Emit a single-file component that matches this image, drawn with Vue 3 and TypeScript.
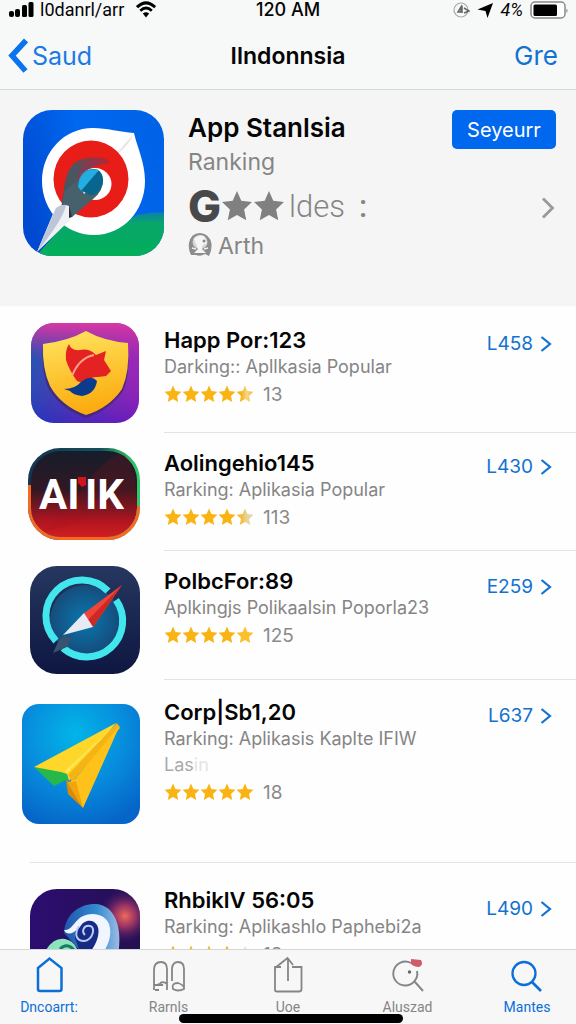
<script setup lang="ts">
type Art = 'shield' | 'wordmark' | 'compass' | 'plane' | 'swirl'

interface AppRow {
  art: Art
  name: string
  detail: string
  more?: string
  faded?: string
  fills: string[]
  count: string
  price: string
}

const gold = '#f9b414'
const starPath =
  'M9 0.6 L11.4 6 L17.4 6.8 L13 10.9 L14.2 17 L9 14 L3.8 17 L5 10.9 L0.6 6.8 L6.6 6 Z'

const apps: AppRow[] = [
  { art: 'shield', name: 'Happ Por:123', detail: 'Darking:: Apllkasia Popular', fills: [gold, gold, gold, gold, 'url(#half-star)'], count: '13', price: 'L458' },
  { art: 'wordmark', name: 'Aolingehio145', detail: 'Rarking: Aplikasia Popular', fills: [gold, gold, gold, gold, 'url(#pale-star)'], count: '113', price: 'L430' },
  { art: 'compass', name: 'PolbcFor:89', detail: 'Aplkingjs Polikaalsin Poporla23', fills: [gold, gold, gold, gold, '#fbc02b'], count: '125', price: 'E259' },
  { art: 'plane', name: 'Corp|Sb1,20', detail: 'Rarking: Aplikasis Kaplte IFIW', more: 'Las', faded: 'in', fills: [gold, gold, gold, gold, gold], count: '18', price: 'L637' },
  { art: 'swirl', name: 'RhbiklV 56:05', detail: 'Rarking: Aplikashlo Paphebi2a', fills: [gold, gold, gold, gold, '#e6e6e6'], count: '18', price: 'L490' },
]

const tabs = [
  { id: 'home', label: 'Dncoarrt:', active: true },
  { id: 'books', label: 'Rarnls', active: false },
  { id: 'share', label: 'Uoe', active: false },
  { id: 'find', label: 'Aluszad', active: false },
  { id: 'search', label: 'Mantes', active: true },
]
</script>

<template>
  <div class="screen">
    <header class="top">
      <div class="status">
        <div class="status-left">
          <svg width="26" height="18" viewBox="8 0 26 18" aria-hidden="true">
            <rect x="9" y="10" width="5" height="6" rx="2" />
            <rect x="15" y="8" width="5" height="8" rx="2" />
            <rect x="22" y="4" width="5" height="12" rx="1.5" />
            <rect x="28.500" y="1" width="5" height="15" rx="1.5" />
          </svg>
          <span class="carrier">l0danrl/arr</span>
          <svg width="20" height="18" viewBox="136 0 20 18" aria-hidden="true">
            <path d="M137 6.2 Q146 -2.6 155.200 6.200" fill="none" stroke="#000" stroke-width="3" />
            <path d="M140.300 9.800 Q146 4.200 151.800 9.800" fill="none" stroke="#000" stroke-width="2.800" />
            <path d="M142.800 12.600 Q146 9.800 149.200 12.600 L146 16.500 Z" />
          </svg>
        </div>
        <span class="time">120 AM</span>
        <div class="status-right">
          <svg width="18" height="18" viewBox="453 0 18 18" aria-hidden="true">
            <circle cx="462" cy="9" r="7" fill="none" stroke="#aaa" stroke-width="1.200" />
            <path d="M463 4.500 V12 M459 11 L462 6 V11 Z M465 7 L470 10 L465 12" fill="none" stroke="#666" stroke-width="1.500" />
          </svg>
          <svg width="16" height="18" viewBox="477 0 16 18" aria-hidden="true">
            <path d="M477.500 8.500 L493 2 L487.500 17 L485.500 10 Z" />
          </svg>
          <span class="percent">4%</span>
          <svg width="38" height="18" viewBox="530 0 38 18" aria-hidden="true">
            <rect x="531" y="1" width="34" height="16" rx="4" fill="#fff" stroke="#888" stroke-width="1.500" />
            <rect x="533.500" y="3.500" width="23.500" height="11.500" rx="1.500" />
            <path d="M566.500 7.500 Q568.500 9.500 566.500 12 Z" fill="#777" />
          </svg>
        </div>
      </div>
      <nav class="navbar" aria-label="Page">
        <a href="#" class="back">
          <svg width="20" height="36" viewBox="8 37 20 36" aria-hidden="true">
            <path d="M26 39.500 L12 54.500 L25.500 70" fill="none" stroke="#0a74ee" stroke-width="5.500" />
          </svg>
          <span>Saud</span>
        </a>
        <h1>Ilndonnsia</h1>
        <a href="#" class="action">Gre</a>
      </nav>
    </header>

    <main class="content">
      <section class="hero">
        <svg class="hero-art" viewBox="23 110 141 146" role="img" aria-label="App icon">
          <defs>
            <linearGradient id="hero-bg" x1="0" y1="0.600" x2="1" y2="0.300">
              <stop offset="0" stop-color="#0049d0" />
              <stop offset="0.5" stop-color="#0068f0" />
              <stop offset="1" stop-color="#0062e6" />
            </linearGradient>
            <linearGradient id="hero-pin" x1="0" y1="1" x2="1" y2="0">
              <stop offset="0" stop-color="#46555b" />
              <stop offset="0.55" stop-color="#4a5661" />
              <stop offset="1" stop-color="#c61f2c" />
            </linearGradient>
            <linearGradient id="hero-ground" x1="0" y1="0" x2="0" y2="1">
              <stop offset="0" stop-color="#0a7fae" />
              <stop offset="0.25" stop-color="#08a66b" />
              <stop offset="1" stop-color="#03ae59" />
            </linearGradient>
            <clipPath id="hero-clip"><rect x="23" y="110" width="141" height="146" rx="29" /></clipPath>
          </defs>
          <g clip-path="url(#hero-clip)">
            <rect x="23" y="110" width="141" height="146" fill="url(#hero-bg)" />
            <path d="M36 256 L66 222 Q120 226 137 215 Q150 212 164 212 V256 Z" fill="url(#hero-ground)" />
            <path d="M93 128 C107 128 120 132 134 133 C137 147 145 162 145 181 C145 211 123 235 94 235 C65 235 42 211 42 181 C42 152 64 128 93 128 Z" fill="#fff" />
            <path d="M134 135 Q125 149 117 154 Q124 143 134 135 Z" fill="#e6e6ea" />
            <ellipse cx="91" cy="179" rx="37.500" ry="38.500" fill="#e91d17" />
            <ellipse cx="95" cy="184" rx="16.500" ry="16" fill="#fff" />
            <path d="M61 209 C65 188 63 160 88 158 C99 156 108 158 110 163 C93 166 78 169 78 187 L85 198 L72 217 Z" fill="url(#hero-pin)" />
            <path d="M77 181 C78 164 91 157 109 161 C96 161 82 166 80 178 Z" fill="#a52a55" opacity="0.550" />
            <path d="M61 209 L65 190 L78 180 L84 194 L103 178 Q104 191 92 200 L72 217 Z" fill="#46616b" />
            <path d="M78 188 C78 174 86 168 95 169 C105 171 106 186 97 193 Q91 197 88 194 L80 190 Z" fill="#08658d" />
            <path d="M78 187 C79 173 88 167 99 170 L81 191 Z" fill="#24ade0" />
            <path d="M55 209 Q62 203 69 206 L71 219 L37 252 Z" fill="#eef0f4" />
            <path d="M56 208 Q62 204 66 205 Q64 218 37 252 Z" fill="#bdc5d6" />
            <path d="M69 205 L72 217 L69 218 Z" fill="#27333d" />
          </g>
        </svg>
        <div class="hero-text">
          <h2>App Stanlsia</h2>
          <p class="hero-sub">Ranking</p>
          <p class="hero-rating">
            <b>G</b>
            <svg v-for="n in 2" :key="n" width="32" height="32" viewBox="0 0 18 18" aria-hidden="true">
              <path :d="starPath" fill="#808080" />
            </svg>
            <span>ldes</span>
            <span class="colon">:</span>
          </p>
          <p class="hero-author">
            <svg width="24" height="26" viewBox="188 233 24 26" aria-hidden="true">
              <path d="M191 255 Q188 249 189 243 Q191 233 200 233 Q210 234 211.500 244 Q212 250 209 256 L205 254 Q200 257 196 255 Z" fill="#8c8c8c" />
              <ellipse cx="200" cy="242" rx="7.500" ry="7" fill="#d6d6d6" />
              <path d="M194 239 Q198 234 204 236 L207 243 L202 246 V249 L206 253 H194 L198 249 Z" fill="#f5f5f5" />
              <circle cx="204" cy="241" r="1.500" fill="#888" />
              <path d="M192 248 L196 249 M204 249 L208 248" stroke="#eee" stroke-width="1.500" />
            </svg>
            <span>Arth</span>
          </p>
        </div>
        <div class="hero-side">
          <button type="button" class="get">Seyeurr</button>
          <svg width="14" height="22" viewBox="0 0 14 22" aria-hidden="true">
            <path d="M1 1.500 L10.500 11 L1 20.500" fill="none" stroke="#9a9a9a" stroke-width="2.800" />
          </svg>
        </div>
      </section>

      <svg class="defs" width="0" height="0" aria-hidden="true">
        <defs>
          <linearGradient id="half-star"><stop offset="0.300" stop-color="#f9b414" /><stop offset="0.600" stop-color="#f6d687" /><stop offset="0.900" stop-color="#f2c251" /></linearGradient>
          <linearGradient id="pale-star"><stop offset="0.300" stop-color="#f3bd3e" /><stop offset="0.600" stop-color="#e7d3a0" /><stop offset="1" stop-color="#e6d3a8" /></linearGradient>
        </defs>
      </svg>

      <ul class="list">
        <li v-for="app in apps" :key="app.name" :class="app.art">
          <div class="row">
            <div class="art">
              <svg v-if="app.art === 'shield'" width="110" height="100" viewBox="30 323 110 100" aria-hidden="true">
                <defs>
                  <linearGradient id="sh-bg" x1="0" y1="0.400" x2="1" y2="0.300">
                    <stop offset="0" stop-color="#1556b4" /><stop offset="0.450" stop-color="#5a3fb0" /><stop offset="1" stop-color="#9a25b8" />
                  </linearGradient>
                  <linearGradient id="sh-top" x1="0" y1="0" x2="0" y2="1">
                    <stop offset="0" stop-color="#d838a4" /><stop offset="0.350" stop-color="#c030a8" stop-opacity="0.100" /><stop offset="1" stop-color="#3c00c8" stop-opacity="0.400" />
                  </linearGradient>
                  <linearGradient id="sh-gold" x1="0.300" y1="0" x2="0.500" y2="1">
                    <stop offset="0" stop-color="#ffe25c" /><stop offset="1" stop-color="#fba90b" />
                  </linearGradient>
                </defs>
                <rect x="31" y="323" width="108" height="100" rx="23" fill="url(#sh-bg)" />
                <rect x="31" y="323" width="108" height="100" rx="23" fill="url(#sh-top)" />
                <path d="M86 332 Q104 342 127 344 Q131 373 123 391 Q110 410 86 418 Q60 409 48 388 Q41 370 43 345 Q68 342 86 332 Z" fill="#3b255f" opacity="0.600" />
                <path d="M86 331 Q104 341 128 343 Q130 371 122 389 Q109 408 86 415 Q61 406 50 386 Q42 369 43 344 Q68 341 86 331 Z" fill="url(#sh-gold)" />
                <path d="M69 344 Q71 351 80 350 Q89 348 96 355 L106 351 L104 360 L111 371 L106 376 L98 377 Q90 376 85 384 L77 381 Q69 370 66 360 Q65 350 69 344 Z" fill="#e52222" />
                <path d="M94 355 Q79 358 72 376" fill="none" stroke="#f7a38a" stroke-width="2" />
                <path d="M64 389 Q75 389 81 382 Q91 374 97 381 Q95 394 82 396 Q73 395 70 391 Z" fill="#0b3b8c" />
              </svg>

              <svg v-else-if="app.art === 'wordmark'" width="112" height="92" viewBox="29 448 112 92" aria-hidden="true">
                <defs>
                  <linearGradient id="wm-bg" x1="0" y1="0" x2="0" y2="1">
                    <stop offset="0" stop-color="#161d2b" /><stop offset="0.450" stop-color="#301824" /><stop offset="0.800" stop-color="#b01520" /><stop offset="1" stop-color="#d41f22" />
                  </linearGradient>
                  <linearGradient id="wm-ring" x1="0" y1="0" x2="1" y2="0">
                    <stop offset="0" stop-color="#123557" /><stop offset="0.650" stop-color="#15505a" /><stop offset="0.850" stop-color="#27ae60" /><stop offset="1" stop-color="#32c96c" />
                  </linearGradient>
                  <clipPath id="wm-low"><rect x="29" y="485" width="56" height="56" /><rect x="85" y="506" width="56" height="35" /></clipPath>
                </defs>
                <rect x="30.500" y="449.500" width="109" height="89" rx="31" fill="url(#wm-bg)" stroke="url(#wm-ring)" stroke-width="3" />
                <path d="M76 499 Q99 463 123 452 Q136 462 137 493 V510 Q113 500 80 521 Q54 533 43 530 Q60 520 76 499 Z" fill="#a10e18" opacity="0.180" />
                <rect x="30.500" y="449.500" width="109" height="89" rx="31" fill="none" stroke="#f46a22" stroke-width="3" clip-path="url(#wm-low)" />
                <text x="40" y="509" class="mark">AI</text>
                <text x="86" y="509" class="mark">IK</text>
                <path d="M79 477 H87 V485 L83 487 L79 483 Z" fill="#cf151c" />
              </svg>

              <svg v-else-if="app.art === 'compass'" width="110" height="108" viewBox="29 565 110 108" aria-hidden="true">
                <defs>
                  <linearGradient id="cp-bg" x1="0" y1="0" x2="0" y2="1">
                    <stop offset="0" stop-color="#26375f" /><stop offset="1" stop-color="#0e1741" />
                  </linearGradient>
                  <radialGradient id="cp-disc"><stop offset="0" stop-color="#0878ad" /><stop offset="1" stop-color="#164c7c" /></radialGradient>
                </defs>
                <rect x="29" y="565" width="110" height="108" rx="27" fill="url(#cp-bg)" />
                <circle cx="84" cy="619" r="35" fill="url(#cp-disc)" />
                <path d="M107 590 A36 36 0 0 0 55 640" fill="none" stroke="#42e7ed" stroke-width="7" />
                <path d="M62 647 A36 36 0 0 0 115 599" fill="none" stroke="#42e7ed" stroke-width="7" />
                <path d="M121 584 L82 613 L92 626 Z" fill="#f04438" />
                <path d="M121 584 L92 626 L87 619 Z" fill="#ce2825" />
                <path d="M83 612 L62 634 L92 626 Z" fill="#e5eaf5" />
                <path d="M62 635 L71 637 L66 646 L52 652 L57 641 Z" fill="#36536f" />
              </svg>

              <svg v-else-if="app.art === 'plane'" width="118" height="120" viewBox="23 704 118 120" aria-hidden="true">
                <defs>
                  <radialGradient id="pl-bg" cx="0.450" cy="0.250" r="0.800">
                    <stop offset="0" stop-color="#02b5e8" /><stop offset="0.550" stop-color="#078bdc" /><stop offset="1" stop-color="#0665c8" />
                  </radialGradient>
                </defs>
                <rect x="23" y="704" width="118" height="120" rx="17" fill="url(#pl-bg)" />
                <path d="M35 767 L55 786 L69 779 L68 772 Z" fill="#26b848" />
                <path d="M67 780 L71 782 L84 808 L69 794 Z" fill="#d88b08" />
                <path d="M117 723 L35 767 L62 772 L68 774 L70 781 Z" fill="#ffd62a" />
                <path d="M118 723 L69 775 L73 782 L121 728 Z" fill="#f6b414" />
                <path d="M68 773 L118 723 L66 771 Z" fill="#fff066" opacity="0.700" />
                <path d="M121 725 L76 779 L69 783 L84 808 Z" fill="#ffc21b" />
                <path d="M77 781 L84 808 L69 783 Z" fill="#f2a30d" />
              </svg>

              <svg v-else width="110" height="108" viewBox="29 889 110 108" aria-hidden="true">
                <defs>
                  <linearGradient id="sw-bg"><stop offset="0" stop-color="#2c0d70" /><stop offset="1" stop-color="#241052" /></linearGradient>
                  <radialGradient id="sw-glow"><stop offset="0" stop-color="#f06a58" /><stop offset="0.400" stop-color="#b63d68" stop-opacity="0.800" /><stop offset="1" stop-color="#4a1a70" stop-opacity="0" /></radialGradient>
                  <linearGradient id="sw-wave"><stop offset="0" stop-color="#2055ad" /><stop offset="0.600" stop-color="#348bd0" /><stop offset="1" stop-color="#9cbce5" /></linearGradient>
                  <clipPath id="sw-clip"><rect x="29" y="889" width="110" height="108" rx="27" /></clipPath>
                </defs>
                <g clip-path="url(#sw-clip)">
                  <rect x="29" y="889" width="110" height="108" fill="url(#sw-bg)" />
                  <circle cx="124" cy="916" r="27" fill="url(#sw-glow)" />
                  <path d="M63 933 C64 913 80 903 96 904 C113 906 122 926 117 955 H83 Z" fill="url(#sw-wave)" />
                  <path d="M75 926 C82 915 99 914 103 924 C106 936 97 945 88 955 H80 L74 938 Z" fill="#172a86" />
                  <path d="M63 930 C70 931 73 922 80 917 C91 911 104 914 108 924 C112 936 106 947 101 955 H86 C96 946 100 932 96 925 C92 918 82 920 79 927 L73 932 Q66 936 63 930 Z" fill="#f1f5ff" />
                  <path d="M78 926 C72 936 77 941 83 941 C92 940 95 927 89 926 C83 925 80 931 84 935" fill="none" stroke="#b9cdf4" stroke-width="2" />
                  <path d="M45 950 Q53 937 64 939 Q75 941 78 955 H44 Z" fill="#8ce4bd" />
                  <path d="M59 949 Q66 942 73 950" fill="none" stroke="#147d62" stroke-width="3" />
                </g>
              </svg>
            </div>

            <div class="info">
              <h3>{{ app.name }}</h3>
              <p class="detail">{{ app.detail }}</p>
              <p v-if="app.more" class="detail more">{{ app.more }}<span>{{ app.faded }}</span></p>
              <p class="rating">
                <svg v-for="(fill, i) in app.fills" :key="i" width="18" height="18" viewBox="0 0 18 18" aria-hidden="true">
                  <path :d="starPath" :fill="fill" />
                </svg>
                <span>{{ app.count }}</span>
              </p>
            </div>

            <a href="#" class="price">
              <span>{{ app.price }}</span>
              <svg width="12" height="18" viewBox="0 0 12 18" aria-hidden="true">
                <path d="M1.500 2 L10 9 L1.500 16" fill="none" stroke="#1272cf" stroke-width="2.200" />
              </svg>
            </a>
          </div>
        </li>
      </ul>
    </main>

    <nav class="tabs" aria-label="Sections">
      <a v-for="tab in tabs" :key="tab.id" href="#" :class="{ active: tab.active }">
        <svg v-if="tab.id === 'home'" width="36" height="38" viewBox="31 956 36 38" aria-hidden="true">
          <path d="M38 968 L49.500 958.500 L61.500 968 V989 Q61.500 991 59.500 991 H40 Q38 991 38 989 Z" fill="none" stroke="currentColor" stroke-width="2.500" />
        </svg>
        <svg v-else-if="tab.id === 'books'" width="36" height="38" viewBox="150 956 36 38" aria-hidden="true">
          <path d="M153 990 V970 Q153 962 160 962 Q166 962 166 969 V990 M153 985 H162 L157 984 M154 990 H158 M159 983 Q163 981 166 984" fill="none" stroke="currentColor" stroke-width="1.800" />
          <path d="M171 981 V968 Q172 962 177 962 Q183 962 183 969 V989 Q177 992 172 989 Q170 983 177 983 Q181 984 183 987" fill="none" stroke="currentColor" stroke-width="1.800" />
        </svg>
        <svg v-else-if="tab.id === 'share'" width="36" height="38" viewBox="270 956 36 38" aria-hidden="true">
          <path d="M281 967 H275 V990 Q275 991.500 277 991.500 H299 Q301.500 991.500 301.500 989 V967 H292 M275 968 L287.500 958 L293 965 M288 958 V981" fill="none" stroke="currentColor" stroke-width="1.800" />
        </svg>
        <svg v-else-if="tab.id === 'find'" width="36" height="38" viewBox="389 956 36 38" aria-hidden="true">
          <path d="M410 963 A12 12 0 1 0 416 971 M414 982 L422 991" fill="none" stroke="currentColor" stroke-width="1.900" />
          <circle cx="408.500" cy="972" r="1.700" fill="#666" />
          <path d="M410 959 L420 960 Q423 965 418 967 Q413 967 410 964 Z" fill="#cf5b6b" />
        </svg>
        <svg v-else width="36" height="38" viewBox="508 956 36 38" aria-hidden="true">
          <circle cx="523" cy="973.500" r="11.500" fill="none" stroke="currentColor" stroke-width="2.300" />
          <path d="M531 982 L540 991" stroke="currentColor" stroke-width="2.600" />
        </svg>
        <span>{{ tab.label }}</span>
      </a>
      <div class="home-bar"></div>
    </nav>
  </div>
</template>

<style>
body {
  margin: 0;
}
</style>

<style scoped>
.screen {
  display: flex;
  flex-direction: column;
  height: 100vh;
  background: #fefefe;
  color: #050505;
  font-family: Inter, "Liberation Sans", sans-serif;
}
h1, h2, h3, p, ul {
  margin: 0;
  padding: 0;
}
svg {
  display: block;
  flex-shrink: 0;
}
a {
  color: #1272cf;
  text-decoration: none;
}
.top {
  flex-shrink: 0;
  background: #f7f8f8;
  border-bottom: 1px solid #d9dadb;
}
.status {
  display: grid;
  grid-template-columns: 1fr auto 1fr;
  height: 20px;
  padding: 0 8px;
  align-items: center;
  line-height: 20px;
}
.status-left,
.status-right {
  display: flex;
  align-items: center;
}
.status-right {
  justify-content: flex-end;
  gap: 7px;
}
.carrier {
  margin: 0 12px 0 6px;
  font-family: Roboto, sans-serif;
  font-size: 18px;
}
.time {
  font-size: 18px;
  font-weight: 500;
}
.percent {
  font-family: Roboto, sans-serif;
  font-size: 18px;
  font-style: italic;
}
.navbar {
  display: grid;
  grid-template-columns: 1fr auto 1fr;
  align-items: center;
  box-sizing: border-box;
  height: 69px;
  padding: 2px 8px 0;
}
.back {
  display: flex;
  align-items: center;
  gap: 4px;
  color: #1b7be4;
  font-size: 25px;
}
h1 {
  font-size: 23px;
  font-weight: 600;
}
.action {
  justify-self: end;
  margin-right: 10px;
  font-size: 26px;
}
.content {
  flex: 1;
  min-height: 0;
  overflow-y: auto;
  scrollbar-width: none;
}
.hero {
  display: flex;
  box-sizing: border-box;
  min-height: 216px;
  padding: 20px 20px 20px 23px;
  background: #f5f5f5;
}
.hero-art {
  width: 141px;
  height: 146px;
}
.hero-text {
  flex: 1;
  margin: 2px 0 0 24px;
  color: #858585;
}
h2 {
  color: #050505;
  font-size: 26px;
  font-weight: 600;
  line-height: 32px;
}
.hero-sub {
  font-size: 23px;
  line-height: 36px;
}
.hero-rating {
  display: flex;
  align-items: center;
  height: 52px;
  font-size: 31px;
}
.hero-rating b {
  color: #48494b;
  font-size: 44px;
  font-weight: 800;
}
.hero-rating span {
  margin-left: 4px;
  font-family: Roboto, sans-serif;
  font-weight: 300;
}
.hero-rating .colon {
  margin-left: 14px;
  font-weight: 500;
}
.hero-author {
  display: flex;
  align-items: center;
  gap: 6px;
  font-size: 23px;
  line-height: 28px;
}
.hero-side {
  display: flex;
  flex-direction: column;
  align-items: flex-end;
  gap: 48px;
}
.get {
  width: 104px;
  height: 39px;
  padding: 0;
  border: 0;
  border-radius: 5px;
  background: #0068ef;
  color: #fff;
  font-family: inherit;
  font-size: 20px;
}
.defs {
  position: absolute;
}
.list {
  list-style: none;
}
li {
  --art-top: 15px;
  --text-top: 16px;
  --price-top: 20px;
  --row-height: 117px;
}
li::after {
  content: "";
  display: block;
  height: 1px;
  margin-left: 164px;
  background: #e2e3e4;
}
.shield {
  --art-top: 17px;
  --text-top: 20px;
  --price-top: 24px;
  --row-height: 126px;
}
.compass {
  --price-top: 22px;
  --row-height: 128px;
}
.plane {
  --art-top: 24px;
  --text-top: 18px;
  --price-top: 22px;
  --row-height: 182px;
}
.plane::after {
  margin-left: 30px;
}
.swirl {
  --art-top: 26px;
  --text-top: 23px;
  --price-top: 32px;
}
.row {
  display: flex;
  gap: 24px;
  box-sizing: border-box;
  min-height: var(--row-height);
  padding: 0 24px 0 22px;
}
.art {
  display: flex;
  flex: 0 0 118px;
  justify-content: flex-end;
  align-items: flex-start;
  padding-top: var(--art-top);
}
.mark {
  fill: #fff;
  font-family: Roboto, sans-serif;
  font-size: 42px;
  font-weight: 700;
}
.info {
  flex: 1;
  padding-top: var(--text-top);
}
h3 {
  font-size: 22px;
  font-weight: 600;
  line-height: 28px;
}
.detail {
  color: #858585;
  font-size: 18px;
  line-height: 26px;
  white-space: nowrap;
}
.more {
  color: #aaa;
}
.more span {
  color: #e4e4e4;
}
.rating {
  display: flex;
  align-items: center;
  height: 28px;
  color: #8a8a8a;
  font-size: 19px;
}
.rating span {
  margin-left: 9px;
}
.price {
  display: flex;
  align-items: center;
  align-self: flex-start;
  gap: 7px;
  margin-top: var(--price-top);
  font-size: 19px;
  line-height: 28px;
}
.tabs {
  position: relative;
  display: flex;
  flex-shrink: 0;
  justify-content: space-between;
  box-sizing: border-box;
  height: 75px;
  padding: 6px 8px 0;
  border-top: 1px solid #d5d6d7;
  background: #f7f7f7;
}
.tabs a {
  display: flex;
  flex-direction: column;
  align-items: center;
  width: 82px;
  color: #858585;
  font-family: Roboto, sans-serif;
  font-size: 14px;
  line-height: 26px;
}
.tabs a.active {
  color: #0c6fd8;
}
.home-bar {
  position: absolute;
  bottom: 1px;
  left: 31%;
  width: 39%;
  height: 9px;
  border-radius: 5px;
  background: #000;
}
</style>
